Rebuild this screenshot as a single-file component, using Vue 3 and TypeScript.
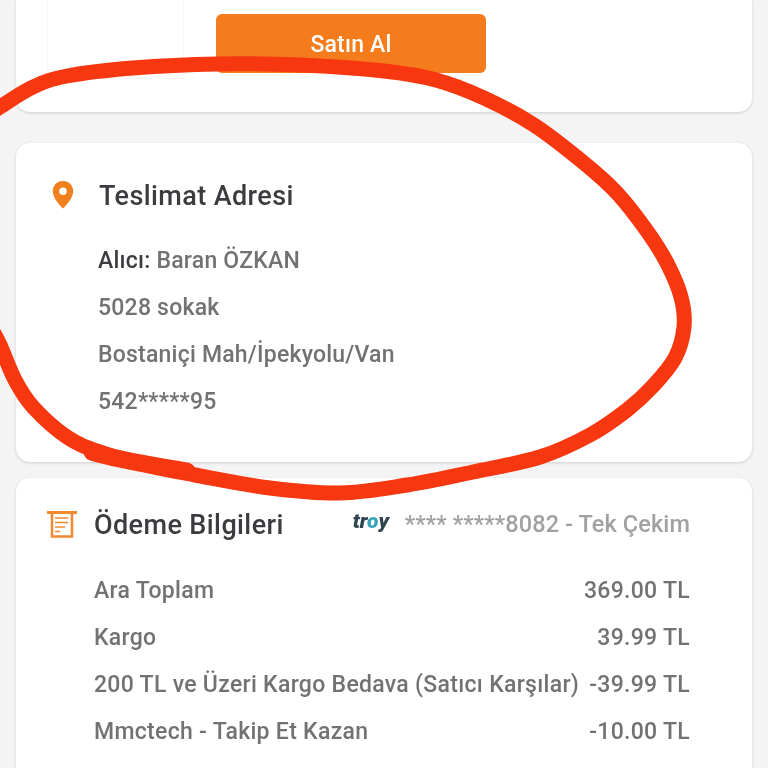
<script setup lang="ts">
interface PriceRow {
  label: string;
  value: string;
}

type Point = [number, number];

const addressLines: string[] = ['5028 sokak', 'Bostaniçi Mah/İpekyolu/Van', '542*****95'];

const priceRows: PriceRow[] = [
  { label: 'Ara Toplam', value: '369.00 TL' },
  { label: 'Kargo', value: '39.99 TL' },
  { label: '200 TL ve Üzeri Kargo Bedava (Satıcı Karşılar)', value: '-39.99 TL' },
  { label: 'Mmctech - Takip Et Kazan', value: '-10.00 TL' }
];

// hand-drawn circle over the address card
const scribblePoints: Point[] = [
  [-8, 113], [0, 107], [33, 87], [67, 76], [133, 68], [217, 64], [300, 65], [384, 71],
  [436, 80], [484, 98], [534, 125], [584, 163], [617, 193], [647, 231], [667, 263],
  [681, 297], [684, 327], [675, 358], [653, 386], [627, 410], [590, 435], [540, 457],
  [473, 472], [407, 485], [340, 493], [270, 488], [195, 475], [150, 466], [100, 452],
  [67, 437], [33, 407], [15, 380], [0, 345], [-8, 330]
];

const smooth = (pts: Point[]): string => {
  let d = `M${pts[0][0]} ${pts[0][1]}`;
  for (let i = 0; i < pts.length - 1; i++) {
    const p0 = pts[Math.max(i - 1, 0)];
    const p1 = pts[i];
    const p2 = pts[i + 1];
    const p3 = pts[Math.min(i + 2, pts.length - 1)];
    const c1x = p1[0] + (p2[0] - p0[0]) / 6;
    const c1y = p1[1] + (p2[1] - p0[1]) / 6;
    const c2x = p2[0] - (p3[0] - p1[0]) / 6;
    const c2y = p2[1] - (p3[1] - p1[1]) / 6;
    d += `C${c1x} ${c1y} ${c2x} ${c2y} ${p2[0]} ${p2[1]}`;
  }
  return d;
};

const scribblePath = smooth(scribblePoints);
</script>

<template>
  <div class="page">
    <section class="card order-card">
      <div class="thumb"></div>
      <button class="buy-btn">Satın Al</button>
    </section>

    <section class="card address-card">
      <header class="head">
        <svg class="pin" viewBox="0 0 22 28" width="22" height="28">
          <path
            fill="#f07f1e"
            fill-rule="evenodd"
            d="M11 0C5 0 .8 4.500 .8 10.200 .8 16.500 7 23.500 11 27.500 15 23.500 21.200 16.500 21.200 10.200 21.200 4.500 17 0 11 0ZM11 6.500a3.800 3.800 0 1 1 0 7.600 3.800 3.800 0 0 1 0-7.600Z"
          />
        </svg>
        <h2 class="title">Teslimat Adresi</h2>
      </header>
      <p class="line"><span class="strong">Alıcı:</span> Baran ÖZKAN</p>
      <p v-for="item in addressLines" :key="item" class="line">{{ item }}</p>
    </section>

    <section class="card payment-card">
      <header class="head pay-head">
        <svg class="receipt" viewBox="0 0 30 28" width="30" height="28" fill="none" stroke="#f0892f">
          <path stroke-width="3" d="M0 2.500H30" />
          <path stroke-width="2.500" d="M5 3V26.500H25V3" />
          <path stroke-width="1.600" d="M8 8H21M8 12.500H21M8 17H18M8 21.500H13" />
        </svg>
        <h2 class="title">Ödeme Bilgileri</h2>
        <span class="troy">tr<i>o</i>y</span>
        <span class="card-no">**** *****8082 - Tek Çekim</span>
      </header>
      <div v-for="row in priceRows" :key="row.label" class="price-row">
        <span>{{ row.label }}</span>
        <span>{{ row.value }}</span>
      </div>
    </section>

    <svg class="scribble" viewBox="0 0 768 768" width="768" height="768" fill="none" stroke="#f6370f" stroke-linecap="round" stroke-linejoin="round">
      <path stroke-width="15" :d="scribblePath" />
      <path stroke-width="17" d="M92 452C125 462 160 466 187 471" />
    </svg>
  </div>
</template>

<style scoped>
.page {
  position: relative;
  width: 768px;
  height: 768px;
  overflow: hidden;
  background: #f4f4f4;
  font-family: Roboto, "Noto Sans", sans-serif;
  color: #727274;
  /* the reference is a soft, recompressed phone capture */
  filter: blur(0.45px);
}

.card {
  margin: 0 16px;
  background: #fff;
  border-radius: 14px;
  box-shadow: 0 1px 3px rgba(0, 0, 0, 0.16);
}

.order-card {
  display: flex;
  align-items: flex-start;
  gap: 32px;
  height: 112px;
  padding-left: 31px;
  box-sizing: border-box;
  border-radius: 0 0 14px 14px;
}

.thumb {
  width: 137px;
  height: 79px;
  box-sizing: border-box;
  border: 1px solid #f6f6f6;
  border-top: 0;
}

.buy-btn {
  width: 270px;
  height: 59px;
  margin-top: 14px;
  padding-top: 2px;
  border: 0;
  border-radius: 6px;
  background: #f57c1c;
  color: #fff;
  font: 500 23px Roboto, sans-serif;
  letter-spacing: 0.2px;
}

.address-card {
  margin-top: 31px;
  padding: 33px 0 37px 82px;
}

.head {
  display: flex;
  align-items: center;
  height: 40px;
}

.address-card .head {
  margin-bottom: 21px;
}

.address-card .title {
  margin-top: -1px;
}

.pin {
  flex: none;
  margin-left: -46px;
  margin-right: 25px;
  margin-top: -2px;
}

.title {
  margin: 0;
  font-size: 27px;
  font-weight: 500;
  letter-spacing: 0.4px;
  color: #3a3c3f;
}

.line {
  margin: 0;
  font-size: 23px;
  font-weight: 500;
  letter-spacing: 0.22px;
  line-height: 47px;
}

.strong {
  color: #3a3c3f;
}

.payment-card {
  margin-top: 16px;
  padding: 26px 62px 40px 78px;
}

.pay-head {
  margin-bottom: 23px;
}

.pay-head .title {
  margin-top: 1px;
}

.receipt {
  flex: none;
  margin-left: -47px;
  margin-right: 17px;
}

.troy {
  margin-left: 69px;
  margin-top: -6px;
  font-size: 21px;
  font-weight: 900;
  font-style: italic;
  letter-spacing: 0;
  color: #2f4450;
}

.troy i {
  color: #35a5b5;
}

.card-no {
  margin-left: auto;
  font-size: 23.5px;
  font-weight: 500;
  letter-spacing: 0.1px;
  color: #a0a1a3;
}

.price-row {
  display: flex;
  justify-content: space-between;
  font-size: 23px;
  font-weight: 500;
  letter-spacing: 0.3px;
  line-height: 47px;
}

.scribble {
  position: absolute;
  top: 0;
  left: 0;
}
</style>
